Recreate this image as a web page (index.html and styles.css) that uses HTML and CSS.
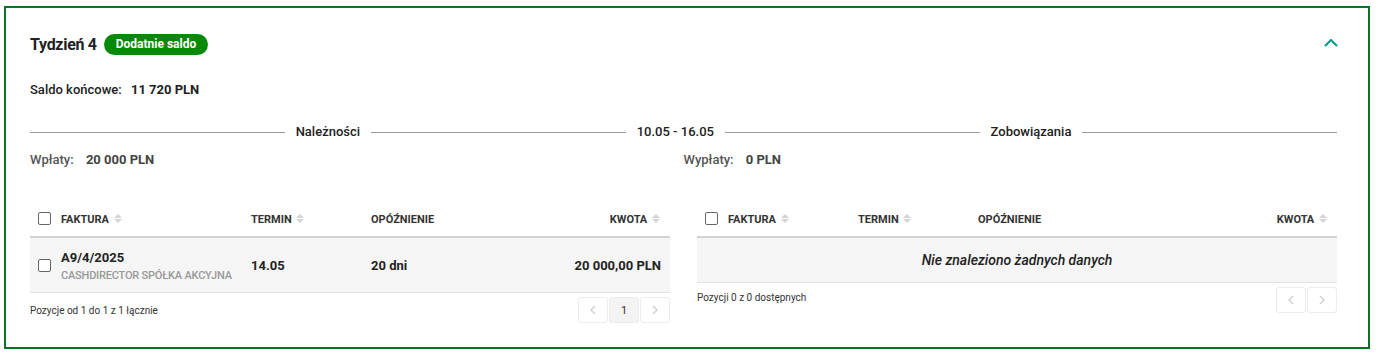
FILE: index.html
```html
<!DOCTYPE html>
<html lang="pl">
<head>
  <meta charset="UTF-8" />
  <meta name="viewport" content="width=device-width, initial-scale=1.0" />
  <title>Tydzień 4</title>
  <link rel="stylesheet" href="styles.css">
</head>
<body>
  <section class="week">
    <header class="week-head">
      <div class="week-title">
        <h2>Tydzień 4</h2>
        <span class="badge">Dodatnie saldo</span>
      </div>
      <button class="toggle" aria-label="Zwiń">
        <svg width="14" height="8" viewBox="0 0 14 8"><polyline points="1,7 7,1 13,7" fill="none" stroke="#00968a" stroke-width="2"/></svg>
      </button>
    </header>

    <div class="balance">Saldo końcowe: <strong>11 720 PLN</strong></div>

    <div class="divider">
      <span class="line"></span>
      <span class="divider-label">Należności</span>
      <span class="line"></span>
      <span class="divider-label">10.05 - 16.05</span>
      <span class="line"></span>
      <span class="divider-label">Zobowiązania</span>
      <span class="line"></span>
    </div>

    <div class="totals">
      <div class="total">Wpłaty: <strong>20 000 PLN</strong></div>
      <div class="total">Wypłaty: <strong>0 PLN</strong></div>
    </div>

    <div class="tables">
      <div class="panel">
        <table class="grid grid-in">
          <colgroup><col class="c-check"><col class="c-inv"><col class="c-term"><col><col class="c-amt"></colgroup>
          <thead>
            <tr>
              <th><span class="check"></span></th>
              <th>Faktura <i class="sort"></i></th>
              <th>Termin <i class="sort"></i></th>
              <th>Opóźnienie</th>
              <th class="num">Kwota <i class="sort"></i></th>
            </tr>
          </thead>
          <tbody>
            <tr>
              <td><span class="check"></span></td>
              <td><div class="inv">A9/4/2025</div><div class="company">CASHDIRECTOR SPÓŁKA AKCYJNA</div></td>
              <td class="strong">14.05</td>
              <td class="strong">20 dni</td>
              <td class="num strong">20 000,00 PLN</td>
            </tr>
          </tbody>
        </table>
        <div class="foot">
          <span class="info">Pozycje od 1 do 1 z 1 łącznie</span>
          <div class="pager">
            <button class="page"><svg width="6" height="10" viewBox="0 0 6 10"><polyline points="5,1 1,5 5,9" fill="none" stroke="#ccc" stroke-width="1.3"/></svg></button>
            <button class="page active">1</button>
            <button class="page"><svg width="6" height="10" viewBox="0 0 6 10"><polyline points="1,1 5,5 1,9" fill="none" stroke="#ccc" stroke-width="1.3"/></svg></button>
          </div>
        </div>
      </div>

      <div class="panel">
        <table class="grid grid-out">
          <colgroup><col class="c-check"><col class="c-inv2"><col class="c-term"><col><col class="c-amt"></colgroup>
          <thead>
            <tr>
              <th><span class="check"></span></th>
              <th>Faktura <i class="sort"></i></th>
              <th>Termin <i class="sort"></i></th>
              <th>Opóźnienie</th>
              <th class="num">Kwota <i class="sort"></i></th>
            </tr>
          </thead>
          <tbody>
            <tr>
              <td colspan="5" class="empty">Nie znaleziono żadnych danych</td>
            </tr>
          </tbody>
        </table>
        <div class="foot foot-empty">
          <span class="info">Pozycji 0 z 0 dostępnych</span>
          <div class="pager">
            <button class="page"><svg width="6" height="10" viewBox="0 0 6 10"><polyline points="5,1 1,5 5,9" fill="none" stroke="#ccc" stroke-width="1.3"/></svg></button>
            <button class="page"><svg width="6" height="10" viewBox="0 0 6 10"><polyline points="1,1 5,5 1,9" fill="none" stroke="#ccc" stroke-width="1.3"/></svg></button>
          </div>
        </div>
      </div>
    </div>
  </section>
</body>
</html>
```

FILE: styles.css
```css
:root {
  font-family: Roboto, "Noto Sans", sans-serif;
  color: #222;
}

body {
  margin: 0;
  padding: 6px 8px 8px 4px;
  background: #fff;
}

.week {
  border: 2px solid #0b7326;
  padding: 26px 31px 24px 24px;
  height: 343px;
  box-sizing: border-box;
}

.week-head {
  display: flex;
  align-items: center;
  justify-content: space-between;
  height: 21px;
}

.week-title {
  display: flex;
  align-items: center;
  gap: 7px;
}

.week-title h2 {
  margin: 0;
  font-size: 16px;
  font-weight: 700;
  letter-spacing: -0.3px;
}

.badge {
  background: #068a06;
  color: #fff;
  font-size: 12px;
  font-weight: 700;
  height: 21px;
  line-height: 21px;
  padding: 0 12px;
  border-radius: 11px;
}

.toggle {
  border: none;
  background: none;
  padding: 0;
  margin-right: -1px;
  margin-top: -4px;
  display: flex;
}

.balance {
  margin-top: 27px;
  font-size: 13px;
  line-height: 16px;
  font-weight: 500;
}

.balance strong {
  margin-left: 6px;
}

.divider {
  display: flex;
  align-items: center;
  gap: 11px;
  margin-top: 26px;
  font-size: 13px;
  line-height: 16px;
  font-weight: 500;
}

.divider .line {
  flex: 1;
  height: 1px;
  background: #9a9a9a;
}

.totals {
  display: flex;
  margin-top: 12px;
  font-size: 13px;
  line-height: 16px;
}

.total {
  flex: 1;
  color: #555;
  font-weight: 500;
}

.total strong {
  color: #444;
  margin-left: 9px;
}

.tables {
  display: flex;
  gap: 27px;
  margin-top: 34px;
}

.panel {
  flex: 1;
  min-width: 0;
}

.grid {
  width: 100%;
  border-collapse: collapse;
  table-layout: fixed;
}

.c-check { width: 31px; }
.c-inv { width: 190px; }
.c-inv2 { width: 130px; }
.c-term { width: 120px; }
.c-amt { width: 160px; }

.grid th {
  height: 34px;
  padding: 0;
  text-align: left;
  font-size: 11px;
  font-weight: 700;
  text-transform: uppercase;
  color: #333;
  border-bottom: 2px solid #d2d2d2;
}

.grid th:first-child,
.grid td:first-child {
  padding-left: 8px;
}

.grid th.num {
  padding-right: 10px;
  text-align: right;
}

.grid td {
  height: 54px;
  padding: 0;
  background: #f5f5f5;
  border-bottom: 1px solid #e2e2e2;
  font-size: 13px;
}

.grid td.num {
  text-align: right;
  padding-right: 9px;
}

.strong {
  font-weight: 700;
}

.inv {
  font-weight: 700;
  line-height: 17px;
}

.company {
  margin-top: 3px;
  font-size: 11px;
  line-height: 13px;
  color: #999;
  font-weight: 500;
  letter-spacing: -0.2px;
}

.grid td.empty {
  height: 44px;
  text-align: center;
  font-style: italic;
  font-weight: 500;
  font-size: 14px;
  padding-left: 0;
}

.check {
  display: inline-block;
  width: 11px;
  height: 11px;
  border: 1px solid #666;
  border-radius: 2px;
  vertical-align: middle;
  background: #fff;
}

.grid th .check {
  margin-top: -3px;
}

.grid td .check {
  margin-top: -2px;
}

.sort {
  display: inline-flex;
  flex-direction: column;
  gap: 1px;
  margin-left: 2px;
  vertical-align: middle;
  margin-top: -2px;
}

.sort::before,
.sort::after {
  content: "";
  border-left: 4px solid transparent;
  border-right: 4px solid transparent;
}

.sort::before {
  border-bottom: 4px solid #d4d4d4;
}

.sort::after {
  border-top: 4px solid #d4d4d4;
}

.foot {
  display: flex;
  align-items: center;
  justify-content: space-between;
  margin-top: 4px;
}

.foot-empty {
  margin-top: 4px;
  align-items: flex-start;
}

.foot-empty .info {
  margin-top: 5px;
}

.info {
  font-size: 10px;
  color: #333;
}

.pager {
  display: flex;
  gap: 1px;
}

.page {
  width: 30px;
  height: 26px;
  border: 1px solid #ececec;
  border-radius: 3px;
  background: #fff;
  font-family: inherit;
  font-size: 11px;
  color: #333;
  padding: 0;
  display: flex;
  align-items: center;
  justify-content: center;
}

.page.active {
  background: #f3f3f3;
}
```
